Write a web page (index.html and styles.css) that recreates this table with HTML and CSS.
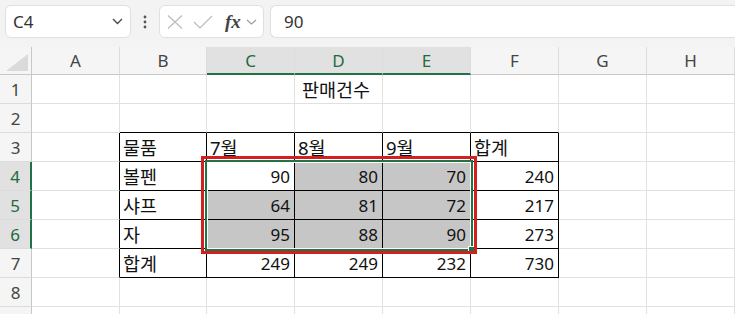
FILE: index.html
```html
<!DOCTYPE html>
<html>
<head>
	<title>판매건수</title>
	<meta charset="utf-8">
	<link rel="stylesheet" href="styles.css">
</head>
<body>
	<div class="toolbar">
		<div class="namebox">
			<span>C4</span>
			<svg class="chev" width="11" height="7" viewBox="0 0 11 7"><path d="M1 1l4.5 4.5L10 1" fill="none" stroke="#444" stroke-width="1.3"/></svg>
		</div>
		<svg class="grip" width="4" height="14" viewBox="0 0 4 14"><circle cx="2" cy="2" r="1.4"/><circle cx="2" cy="7" r="1.4"/><circle cx="2" cy="12" r="1.4"/></svg>
		<div class="fxbox">
			<svg width="16" height="14" viewBox="0 0 16 14"><path d="M1 0.5l14 13M15 0.5l-14 13" stroke="#bbb" stroke-width="1.2"/></svg>
			<svg width="20" height="14" viewBox="0 0 20 14"><path d="M1 7l6 6L19 1" fill="none" stroke="#bbb" stroke-width="1.2"/></svg>
			<span class="fx">fx</span>
			<svg width="11" height="6" viewBox="0 0 11 6"><path d="M1 1l4.5 4L10 1" fill="none" stroke="#999" stroke-width="1.1"/></svg>
		</div>
		<div class="formula">90</div>
	</div>

	<div class="sheet">
		<!-- header row -->
		<div class="corner"><span></span></div>
		<div class="ch">A</div><div class="ch">B</div><div class="ch on">C</div><div class="ch on">D</div><div class="ch on">E</div><div class="ch">F</div><div class="ch">G</div><div class="ch">H</div>

		<div class="rh">1</div>
		<div class="c"></div><div class="c"></div><div class="c"></div><div class="c title">판매건수</div><div class="c"></div><div class="c"></div><div class="c"></div><div class="c"></div>

		<div class="rh">2</div>
		<div class="c"></div><div class="c bb"></div><div class="c bb"></div><div class="c bb"></div><div class="c bb"></div><div class="c bb"></div><div class="c"></div><div class="c"></div>

		<div class="rh">3</div>
		<div class="c br"></div><div class="c t">물품</div><div class="c t">7월</div><div class="c t">8월</div><div class="c t">9월</div><div class="c t">합계</div><div class="c"></div><div class="c"></div>

		<div class="rh on">4</div>
		<div class="c br"></div><div class="c t">볼펜</div><div class="c t num">90</div><div class="c t num sel">80</div><div class="c t num sel">70</div><div class="c t num">240</div><div class="c"></div><div class="c"></div>

		<div class="rh on">5</div>
		<div class="c br"></div><div class="c t">샤프</div><div class="c t num sel">64</div><div class="c t num sel">81</div><div class="c t num sel">72</div><div class="c t num">217</div><div class="c"></div><div class="c"></div>

		<div class="rh on">6</div>
		<div class="c br"></div><div class="c t">자</div><div class="c t num sel">95</div><div class="c t num sel">88</div><div class="c t num sel">90</div><div class="c t num">273</div><div class="c"></div><div class="c"></div>

		<div class="rh">7</div>
		<div class="c br"></div><div class="c t">합계</div><div class="c t num">249</div><div class="c t num">249</div><div class="c t num">232</div><div class="c t num">730</div><div class="c"></div><div class="c"></div>

		<div class="rh">8</div>
		<div class="c"></div><div class="c"></div><div class="c"></div><div class="c"></div><div class="c"></div><div class="c"></div><div class="c"></div><div class="c"></div>

		<!-- row 9, only its top edge is on screen -->
		<div class="rh"></div>
		<div class="c"></div><div class="c"></div><div class="c"></div><div class="c"></div><div class="c"></div><div class="c"></div><div class="c"></div><div class="c"></div>

		<!-- selection C4:E6 and the red mark around it -->
		<div class="selection"><span class="handle"></span></div>
		<div class="mark"></div>
	</div>
</body>
</html>
```

FILE: styles.css
```css
body {
	margin: 0;
	overflow: hidden;
	background: #fff;
	font-family: "Noto Sans", "Noto Sans CJK KR", sans-serif;
	color: #222;
}

/* formula bar */
.toolbar {
	height: 47px;
	box-sizing: border-box;
	background: #f3f3f3;
	display: flex;
	align-items: flex-start;
	padding: 5px 0 0 5px;
}
.namebox, .fxbox, .formula {
	height: 33px;
	box-sizing: border-box;
	background: #fff;
	border: 1px solid #e0e0e0;
	border-radius: 6px;
	display: flex;
	align-items: center;
}
.namebox {
	width: 126px;
	padding: 0 7px;
	justify-content: space-between;
	font-size: 17px;
	color: #333;
}
.grip {
	fill: #555;
	margin: 10px 12px 0 12px;
}
.fxbox {
	width: 105px;
	padding: 0 6px 0 7px;
	gap: 10px;
}
.fxbox .fx {
	font-family: "Liberation Serif", serif;
	font-style: italic;
	font-weight: bold;
	font-size: 19px;
	color: #444;
	margin-left: 2px;
	margin-right: -5px;
}
.formula {
	flex: 1;
	margin-left: 6px;
	border-right: none;
	border-radius: 6px 0 0 6px;
	padding-left: 13px;
	font-size: 17px;
	color: #333;
}

/* grid */
.sheet {
	position: relative;
	display: grid;
	grid-template-columns: 32px 88px 87px 88px 88px 88px 88px 88px 88px;
	grid-template-rows: 28px repeat(9, 29px);
}
.sheet > div {
	box-sizing: border-box;
}
.ch, .rh, .corner {
	background: #f5f5f5;
	color: #444;
	font-size: 17px;
	display: flex;
	align-items: center;
	justify-content: center;
}
.ch {
	border-right: 1px solid #dcdcdc;
	border-bottom: 1px solid #c8c8c8;
}
.rh {
	border-right: 1px solid #c8c8c8;
	border-bottom: 1px solid #dcdcdc;
}
.corner {
	border-right: 1px solid #c8c8c8;
	border-bottom: 1px solid #c8c8c8;
	align-items: flex-end;
	justify-content: flex-end;
	padding: 0 3px 3px 0;
}
.corner span {
	width: 0;
	height: 0;
	border-left: 22px solid transparent;
	border-bottom: 17px solid #dadada;
}
.ch.on {
	background: #e1e1e1;
	color: #1d6b40;
	border-bottom: 2px solid #217346;
}
.rh.on {
	background: #e1e1e1;
	color: #1d6b40;
	border-right: 2px solid #217346;
}

.c {
	border-right: 1px solid #e1e1e1;
	border-bottom: 1px solid #e1e1e1;
	font-size: 18.5px;
	display: flex;
	align-items: center;
	padding: 0 4px 0 3px;
	white-space: nowrap;
	color: #111;
}
.c.t {
	border-right-color: #000;
	border-bottom-color: #000;
}
.c.br {
	border-right-color: #000;
}
.c.bb {
	border-bottom-color: #000;
}
.c.num {
	justify-content: flex-end;
	font-size: 17px;
}
.c.sel {
	background: #c6c6c6;
}
.c.title {
	justify-content: center;
	padding-right: 8px;
}

/* overlays */
.selection {
	position: absolute;
	left: 205px;
	top: 113px;
	width: 268px;
	height: 91px;
	box-sizing: border-box;
	border: 2px solid #217346;
	box-shadow: inset 0 0 0 1px #fff;
}
.handle {
	position: absolute;
	right: -4px;
	bottom: -4px;
	width: 5px;
	height: 5px;
	background: #217346;
	border: 1px solid #fff;
}
.mark {
	position: absolute;
	left: 201px;
	top: 109px;
	width: 276px;
	height: 98px;
	box-sizing: border-box;
	border: 3px solid #d21f1f;
}
```
